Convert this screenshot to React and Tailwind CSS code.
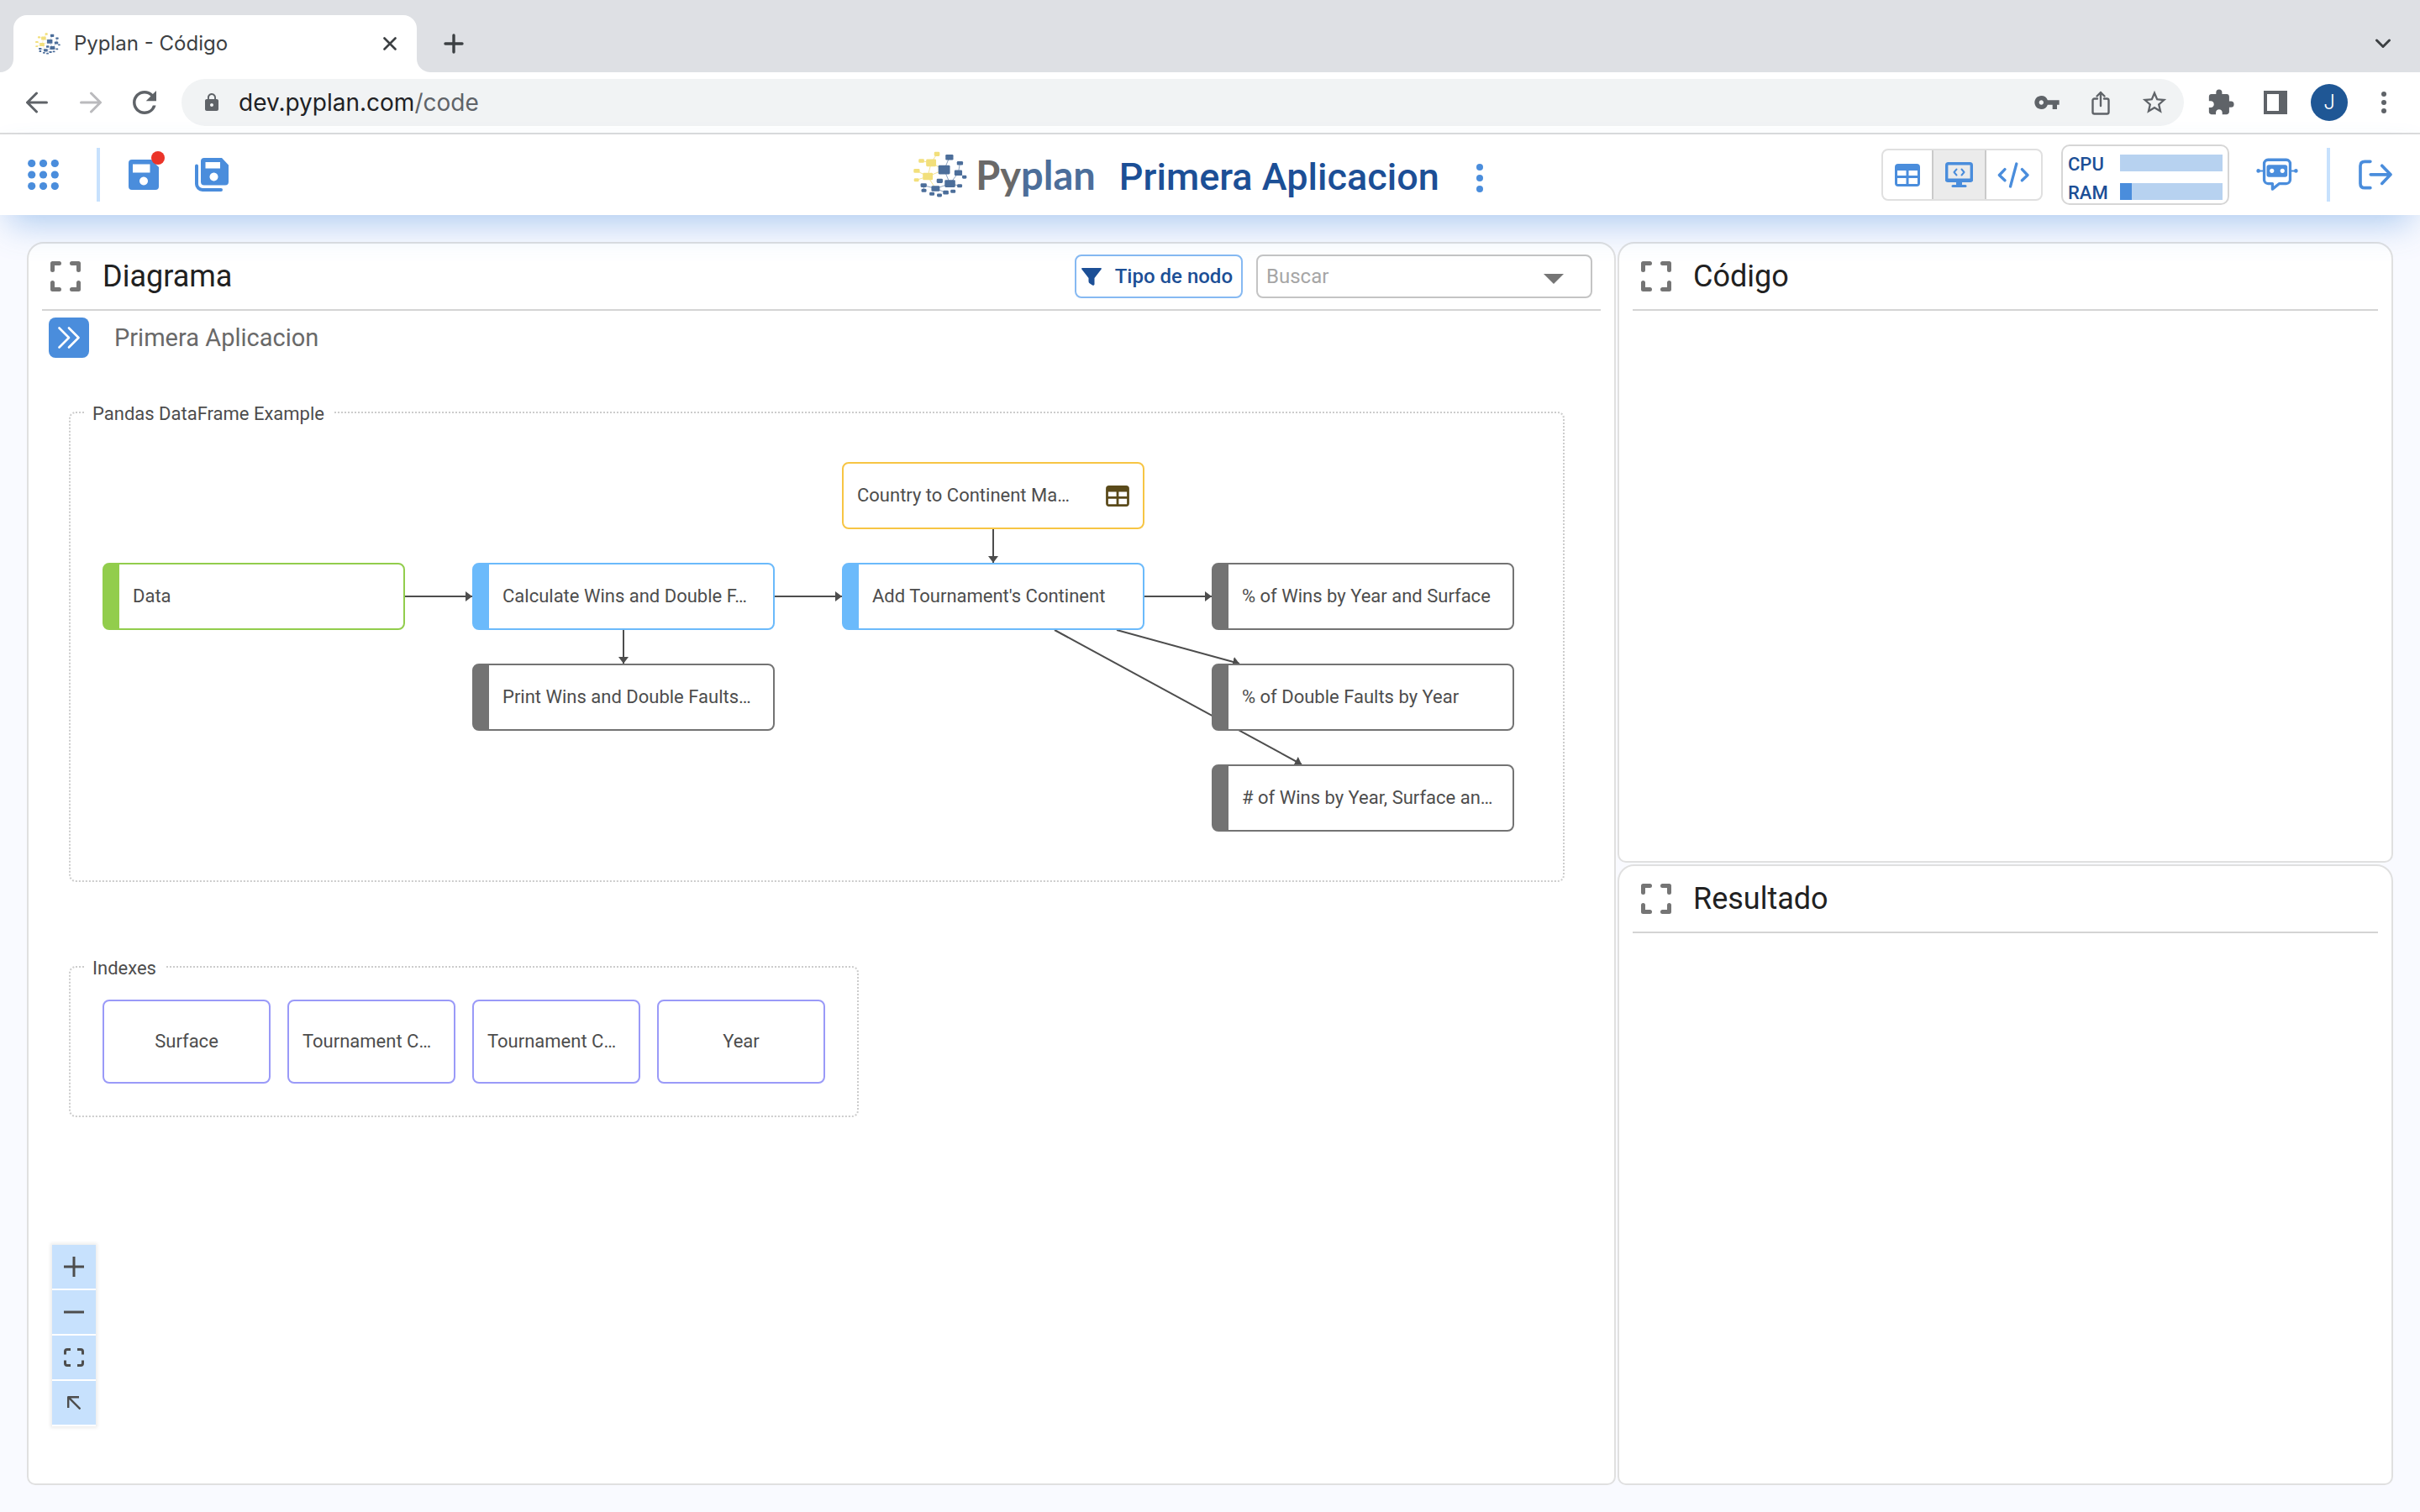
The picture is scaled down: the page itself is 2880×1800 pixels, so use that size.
import React from 'react';
import { MdExtension, MdLock, MdRefresh, MdStarOutline, MdVpnKey } from 'react-icons/md';

/* ---------- logo ---------- */

const YELLOW_SQUARES = [
  [113, 38, 20, 16], [57, 63, 20, 14], [92, 70, 36, 26], [40, 99, 22, 14], [80, 119, 36, 26], [39, 132, 18, 12],
];
const BLUE_SQUARES = [
  [158, 50, 28, 20], [196, 71, 22, 14], [139, 95, 42, 32], [190, 106, 28, 20], [212, 121, 16, 12],
  [123, 135, 22, 16], [160, 145, 38, 26], [195, 153, 18, 12], [65, 151, 22, 14], [66, 170, 18, 12],
  [108, 163, 30, 20], [145, 177, 20, 14], [171, 173, 18, 12], [95, 182, 18, 12], [122, 187, 18, 12],
];

function Mark({ className }) {
  return (
    <svg viewBox="28 28 194 168" className={className} aria-hidden="true">
      <path d="M57 63L92 70L139 95L80 119L92 70M40 99L80 119L108 163M39 132L80 119M113 38L92 70" fill="none" stroke="#f3e292" strokeWidth="3" />
      <path d="M158 50L139 95L160 145L190 106L212 121M160 145L195 153M65 151L108 163L160 145M108 163L145 177M66 170L65 151M190 106L196 71" fill="none" stroke="#8aa0bd" strokeWidth="3" />
      {YELLOW_SQUARES.map(([x, y, w, h]) => (
        <rect key={`${x}-${y}`} x={x - w / 2} y={y - h / 2} width={w} height={h} rx="4" fill="#f2df7b" />
      ))}
      {BLUE_SQUARES.map(([x, y, w, h]) => (
        <rect key={`${x}-${y}`} x={x - w / 2} y={y - h / 2} width={w} height={h} rx="4" fill="#4c6e9a" />
      ))}
    </svg>
  );
}

/* ---------- icons ---------- */

function Stroke({ box, className, width = 3, cap = 'round', children }) {
  return (
    <svg viewBox={box} className={className} fill="none" stroke="currentColor" strokeWidth={width} strokeLinecap={cap} strokeLinejoin="round" aria-hidden="true">
      {children}
    </svg>
  );
}

function TableIcon({ className }) {
  return (
    <svg viewBox="0 0 30 27" className={className} aria-hidden="true">
      <path fill="currentColor" fillRule="evenodd" d="M4 0H26a4 4 0 0 1 4 4V23a4 4 0 0 1-4 4H4a4 4 0 0 1-4-4V4a4 4 0 0 1 4-4ZM3 8V14H13.500V8ZM16.500 8V14H27V8ZM3 17V24H13.500V17ZM16.500 17V24H27V17Z" />
    </svg>
  );
}

function Disk({ className }) {
  return (
    <svg viewBox="0 0 36 36" className={className} aria-hidden="true">
      <path fill="currentColor" fillRule="evenodd" d="M4 0H27L36 9V32a4 4 0 0 1-4 4H4a4 4 0 0 1-4-4V4a4 4 0 0 1 4-4ZM5 5.500V15.500H25.500V5.500ZM18 20.500a5 5 0 1 0 .01 0Z" />
    </svg>
  );
}

function ExpandIcon() {
  return (
    <Stroke box="0 0 36 36" width={5} className="block size-9 text-[#757575]">
      <path d="M2.500 10.500V2.500H10.500M25.500 2.500H33.500V10.500M33.500 25.500V33.500H25.500M10.500 33.500H2.500V25.500" />
    </Stroke>
  );
}

/* ---------- browser frame ---------- */

function BrowserFrame() {
  return (
    <div className="font-[Inter,sans-serif]">
      <div className="flex h-[86px] items-center justify-between bg-[#dee0e4] pl-4 pr-[34px] text-[#3c4043]">
        <div className="flex h-full items-center gap-8">
          <div className="relative flex h-[68px] w-[480px] items-center self-end rounded-t-2xl bg-white pl-[26px] pr-6">
            <svg viewBox="0 0 16 16" className="absolute bottom-0 -left-4 size-4" aria-hidden="true"><path d="M16 0V16H0A16 16 0 0 0 16 0Z" fill="#fff" /></svg>
            <svg viewBox="0 0 16 16" className="absolute bottom-0 -right-4 size-4" aria-hidden="true"><path d="M0 0V16H16A16 16 0 0 1 0 0Z" fill="#fff" /></svg>
            <Mark className="block w-[30px]" />
            <span className="ml-4 flex-1 truncate text-2xl">Pyplan - Código</span>
            <button type="button" aria-label="Cerrar pestaña">
              <Stroke box="0 0 16 16" width={2.6} className="block size-4"><path d="M1.500 1.500L14.500 14.500M14.500 1.500L1.500 14.500" /></Stroke>
            </button>
          </div>
          <button type="button" aria-label="Nueva pestaña" className="pt-[18px]">
            <Stroke box="0 0 24 24" width={3.4} className="block size-6"><path d="M12 2V22M2 12H22" /></Stroke>
          </button>
        </div>
        <button type="button" aria-label="Buscar pestañas" className="pt-[18px]">
          <Stroke box="0 0 20 12" width={3} className="block h-3 w-5"><path d="M2.500 2L10 9.500L17.500 2" /></Stroke>
        </button>
      </div>

      <div className="flex h-[74px] items-center border-b-2 border-[#dcdcdc] bg-white pl-[31px] pr-10 text-[#5f6368]">
        <button type="button" aria-label="Atrás">
          <Stroke box="0 0 26 26" className="block size-[26px]"><path d="M24.500 13H2M12.500 2L1.500 13L12.500 24" /></Stroke>
        </button>
        <button type="button" aria-label="Adelante" className="ml-[38px] text-[#bababd]">
          <Stroke box="0 0 26 26" className="block size-[26px]"><path d="M1.500 13H24M13.500 2L24.500 13L13.500 24" /></Stroke>
        </button>
        <button type="button" aria-label="Recargar" className="ml-[30px]">
          <MdRefresh className="block size-[42px]" />
        </button>
        <div className="ml-[23px] flex h-14 flex-1 items-center rounded-full bg-[#f1f3f4] pl-6 pr-[18px]">
          <MdLock className="block size-6" />
          <div role="textbox" aria-label="Dirección" className="ml-5 flex-1 text-[28px] leading-9 text-[#5f6368]">
            <span className="text-[#202124]">dev.pyplan.com</span>/code
          </div>
          <button type="button" aria-label="Contraseñas"><MdVpnKey className="block size-8" /></button>
          <button type="button" aria-label="Compartir" className="ml-[37px]">
            <Stroke box="0 0 22 29" width={2.4} className="block h-[29px] w-[22px]">
              <path d="M7 9.500H3.500a2 2 0 0 0-2 2V25.500a2 2 0 0 0 2 2H18.500a2 2 0 0 0 2-2V11.500a2 2 0 0 0-2-2H15M11 18V2M6.500 6.500L11 2L15.500 6.500" />
            </Stroke>
          </button>
          <button type="button" aria-label="Favorito" className="ml-9"><MdStarOutline className="block size-[34px]" /></button>
        </div>
        <button type="button" aria-label="Extensiones" className="ml-[27px]"><MdExtension className="block size-[34px]" /></button>
        <button type="button" aria-label="Panel lateral" className="ml-[34px]">
          <svg viewBox="0 0 28 28" className="block size-7" aria-hidden="true"><path fill="currentColor" fillRule="evenodd" d="M0 0H28V28H0ZM4 4V24H18V4Z" /></svg>
        </button>
        <button type="button" className="ml-7 flex size-11 items-center justify-center rounded-full bg-[#1f5795] text-2xl font-light text-white">J</button>
        <button type="button" aria-label="Menú" className="ml-10 flex flex-col gap-1">
          <span className="size-1.5 rounded-full bg-current" />
          <span className="size-1.5 rounded-full bg-current" />
          <span className="size-1.5 rounded-full bg-current" />
        </button>
      </div>
    </div>
  );
}

/* ---------- application header ---------- */

function Usage({ label, value }) {
  return (
    <div className="flex h-5 items-end">
      <span className="w-[62px] text-[22px] leading-4 font-medium text-[#1c4f96]">{label}</span>
      <div role="meter" aria-label={label} aria-valuenow={value} aria-valuemin={0} aria-valuemax={100} className="h-5 flex-1 bg-[#b7d2f0]">
        <div className="h-full bg-[#4a8ddc]" style={{ width: `${value}%` }} />
      </div>
    </div>
  );
}

function AppHeader() {
  return (
    <header className="relative z-10 grid h-24 grid-cols-[1fr_auto_1fr] items-center bg-white px-[33px] text-[#4a8ddc] shadow-[0_20px_40px_-10px_rgba(74,141,220,0.43)]">
      <div className="flex items-center">
        <button type="button" aria-label="Aplicaciones">
          <svg viewBox="0 0 37 36" className="block h-9 w-[37px]" fill="currentColor" aria-hidden="true">
            {[4.7, 18.5, 32.300].map((x) => [4.5, 18, 31.500].map((y) => <circle key={`${x}-${y}`} cx={x} cy={y} r="4.6" />))}
          </svg>
        </button>
        <div className="ml-[45px] h-16 w-1 bg-[#c7e1fd]" />
        <button type="button" aria-label="Guardar" className="relative ml-[34px]">
          <Disk className="block size-9" />
          <span className="absolute -top-2.5 -right-[7px] size-4 rounded-full bg-[#eb3429]" />
        </button>
        <button type="button" aria-label="Guardar como" className="ml-[43px]">
          <svg viewBox="0 0 40 40" className="block size-10" aria-hidden="true">
            <path d="M2 9.500V31a7 7 0 0 0 7 7H31" fill="none" stroke="currentColor" strokeWidth="4" strokeLinecap="round" />
            <path fill="currentColor" fillRule="evenodd" d="M11 0H32L40 8.500V28.500a4 4 0 0 1-4 4H11a4 4 0 0 1-4-4V4a4 4 0 0 1 4-4ZM12.500 5V12.500H30V5ZM22.500 17.500a5 5 0 1 0 .01 0Z" />
          </svg>
        </button>
      </div>

      <div className="flex items-center pr-1">
        <Mark className="block w-16" />
        <span className="ml-2.5 font-[Lato,sans-serif] text-[47px] leading-[56px] font-bold text-[#696969]">
          Py<span className="text-[#4c6e9a]">plan</span>
        </span>
        <h1 className="ml-7 pt-1.5 text-[45px] leading-[52px] font-medium text-[#1c4f96]">Primera Aplicacion</h1>
        <button type="button" aria-label="Opciones" className="ml-5 flex w-14 flex-col items-center gap-[5px] pt-2">
          <span className="size-2 rounded-full bg-current" />
          <span className="size-2 rounded-full bg-current" />
          <span className="size-2 rounded-full bg-current" />
        </button>
      </div>

      <div className="flex items-center justify-end">
        <div className="flex h-[62px] overflow-hidden rounded-lg border-2 border-[#e0e0e0]">
          <button type="button" aria-label="Interfaces" className="flex w-[58px] items-center justify-center">
            <TableIcon className="block h-[27px] w-[30px]" />
          </button>
          <button type="button" aria-label="Diagrama" aria-pressed="true" className="-my-0.5 flex w-[65px] items-center justify-center border-2 border-[#cacaca] bg-[#ebebeb]">
            <svg viewBox="0 0 33 30" className="block h-[30px] w-[33px]" fill="none" stroke="currentColor" strokeLinecap="round" strokeLinejoin="round" aria-hidden="true">
              <rect x="1.700" y="1.700" width="29.600" height="20.600" rx="2" strokeWidth="3.400" />
              <path d="M2 21.500H31" strokeWidth="4" />
              <path d="M13 23H20V29H13Z" fill="currentColor" stroke="none" />
              <path d="M9 28.500H24" strokeWidth="3" />
              <path d="M13.500 8.500L10.500 12L13.500 15.500M19.500 8.500L22.500 12L19.500 15.500" strokeWidth="2" />
            </svg>
          </button>
          <button type="button" aria-label="Código" className="flex w-[65px] items-center justify-center">
            <Stroke box="-8 307 116 94" width={10} className="block h-[31px] w-[39px]">
              <path d="M18 333L-2 354L18 373M60 313L38 395M80 333L100 354L80 373" />
            </Stroke>
          </button>
        </div>

        <div className="ml-[22px] flex h-[72px] w-[200px] flex-col gap-3.5 rounded-[10px] border-2 border-[#d6d6d6] px-1.5 pt-2.5">
          <Usage label="CPU" value={0} />
          <Usage label="RAM" value={11.500} />
        </div>

        <button type="button" aria-label="Asistente" className="ml-8">
          <svg viewBox="914 290 152 126" className="block h-[42px] w-[50px]" fill="none" stroke="currentColor" strokeLinejoin="round" aria-hidden="true">
            <path d="M957 299H1023a14 14 0 0 1 14 14V371a14 14 0 0 1-14 14H998L973 405V385H957a14 14 0 0 1-14-14V313a14 14 0 0 1 14-14Z" strokeWidth="10" />
            <path d="M922 339H942M1038 339H1058" strokeWidth="6" />
            <circle cx="922" cy="339" r="7" fill="currentColor" stroke="none" />
            <circle cx="1058" cy="339" r="7" fill="currentColor" stroke="none" />
            <path fillRule="evenodd" fill="currentColor" stroke="none" d="M960 317H1019a8 8 0 0 1 8 8V353a8 8 0 0 1-8 8H960a8 8 0 0 1-8-8V325a8 8 0 0 1 8-8ZM971 331a8 8 0 1 0 .01 0ZM1009 331a8 8 0 1 0 .01 0Z" />
          </svg>
        </button>
        <div className="ml-[34px] h-16 w-1 bg-[#c7e1fd]" />
        <button type="button" aria-label="Salir" className="ml-[34px]">
          <Stroke box="1281 300 121 109" width={11} className="block h-9 w-10">
            <path d="M1323 307H1303Q1287 307 1287 323V386Q1287 402 1303 402H1323M1324 354H1396M1365 322L1396 354L1365 386" />
          </Stroke>
        </button>
      </div>
    </header>
  );
}

/* ---------- panels ---------- */

function Panel({ title, actions, children }) {
  return (
    <section className="flex min-h-0 flex-col rounded-t-[20px] rounded-b-[10px] border-2 border-[#e0e0e0] bg-white">
      <div className="mx-4 flex h-20 shrink-0 items-center gap-4 border-b-2 border-[#d4d4d4] px-2.5">
        <button type="button" aria-label={`Expandir ${title}`}><ExpandIcon /></button>
        <h2 className="ml-2.5 flex-1 text-4xl text-[#212121]">{title}</h2>
        {actions}
      </div>
      {children}
    </section>
  );
}

function DiagramActions() {
  return (
    <>
      <button type="button" className="flex h-[52px] items-center gap-4 rounded-lg border-2 border-[#86b9f2] pr-2.5 pl-1.5 text-2xl font-medium text-[#1c4f96]">
        <svg viewBox="0 0 24 21" className="block h-[21px] w-6" fill="currentColor" aria-hidden="true">
          <path d="M1 0H23Q24.500 0.300 23.500 1.800L15.500 12V19.500Q15 21.500 13 20.500L10 18.500Q8.500 17.500 8.500 16V12L.5 1.800Q-.5 .3 1 0Z" />
        </svg>
        Tipo de nodo
      </button>
      <div className="flex h-[52px] w-[400px] items-center rounded-lg border-2 border-[#c4c4c4] pr-8 pl-2.5">
        <input type="text" role="combobox" aria-expanded="false" aria-label="Buscar" placeholder="Buscar" className="min-w-0 flex-1 bg-transparent text-2xl text-[#212121] outline-none placeholder:text-[#a6a6a6]" />
        <button type="button" aria-label="Abrir lista" className="pt-1.5">
          <svg viewBox="0 0 24 12" className="block h-3 w-6" fill="#757575" aria-hidden="true"><path d="M0 0H24L12 12Z" /></svg>
        </button>
      </div>
    </>
  );
}

/* ---------- diagram ---------- */

const GROUPS = [
  { title: 'Pandas DataFrame Example', x: 48, y: 64, w: 1780, h: 560 },
  { title: 'Indexes', x: 48, y: 724, w: 940, h: 180 },
];

const TONES = {
  green: 'border-[#92cd4c] border-l-[20px] text-left',
  blue: 'border-[#6bbafb] border-l-[20px] text-left',
  gray: 'border-[#737373] border-l-[20px] text-left',
  amber: 'border-[#f7c544] text-left',
  violet: 'border-[#9a9af8] text-center',
  violetLong: 'border-[#9a9af8] text-left',
};

const NODES = [
  { label: 'Data', tone: 'green', x: 88, y: 244 },
  { label: 'Calculate Wins and Double F…', tone: 'blue', x: 528, y: 244 },
  { label: 'Print Wins and Double Faults…', tone: 'gray', x: 528, y: 364 },
  { label: 'Country to Continent Ma…', tone: 'amber', x: 968, y: 124, table: true },
  { label: "Add Tournament's Continent", tone: 'blue', x: 968, y: 244 },
  { label: '% of Wins by Year and Surface', tone: 'gray', x: 1408, y: 244 },
  { label: '% of Double Faults by Year', tone: 'gray', x: 1408, y: 364 },
  { label: '# of Wins by Year, Surface an…', tone: 'gray', x: 1408, y: 484 },
  { label: 'Surface', tone: 'violet', x: 88, y: 764, w: 200, h: 100 },
  { label: 'Tournament C…', tone: 'violetLong', x: 308, y: 764, w: 200, h: 100 },
  { label: 'Tournament C…', tone: 'violetLong', x: 528, y: 764, w: 200, h: 100 },
  { label: 'Year', tone: 'violet', x: 748, y: 764, w: 200, h: 100 },
];

const EDGES = [
  [448, 284, 528, 284], [888, 284, 968, 284], [1328, 284, 1408, 284],
  [708, 324, 708, 364], [1148, 204, 1148, 244],
  [1295, 324, 1441, 364], [1221, 324, 1515, 484],
];

function Diagram() {
  return (
    <div className="relative flex-1 overflow-hidden text-[22px] leading-[26px] text-[#4d4d4d]">
      {GROUPS.map((g) => (
        <div key={g.title} className="absolute rounded-lg border-2 border-dotted border-[#cccccc]" style={{ left: g.x, top: g.y, width: g.w, height: g.h }}>
          <span className="absolute -top-3 left-4 bg-white px-2.5 whitespace-nowrap">{g.title}</span>
        </div>
      ))}
      <svg className="absolute inset-0 size-full" stroke="#4d4d4d" strokeWidth="2" aria-hidden="true">
        <defs>
          <marker id="tip" markerUnits="userSpaceOnUse" markerWidth="8" markerHeight="12" refX="8" refY="6" orient="auto">
            <path d="M0 0L8 6L0 12Z" fill="#4d4d4d" stroke="none" />
          </marker>
        </defs>
        {EDGES.map(([x1, y1, x2, y2]) => (
          <line key={`${x1}-${y1}-${x2}`} x1={x1} y1={y1} x2={x2} y2={y2} markerEnd="url(#tip)" />
        ))}
      </svg>
      {NODES.map((n) => (
        <button
          key={`${n.x}-${n.y}`}
          type="button"
          className={`absolute flex items-center rounded-lg border-2 bg-white px-4 ${TONES[n.tone]}`}
          style={{ left: n.x, top: n.y, width: n.w || 360, height: n.h || 80 }}
        >
          <span className="flex-1 whitespace-nowrap">{n.label}</span>
          {n.table && <TableIcon className="block h-[25px] w-7 text-[#5a4a1a]" />}
        </button>
      ))}
    </div>
  );
}

function ZoomButton({ label, children }) {
  return (
    <button type="button" aria-label={label} className="flex size-[52px] items-center justify-center bg-[#c7e1fd] text-[#4d4d4d]">
      {children}
    </button>
  );
}

function ZoomControls() {
  return (
    <div className="absolute bottom-[68px] left-7 flex flex-col gap-0.5 bg-white pb-0.5 shadow-[0_0_4px_2px_rgba(0,0,0,0.08)]">
      <ZoomButton label="Acercar">
        <Stroke box="0 0 24 24" width={3} cap="butt" className="block size-6"><path d="M12 0V24M0 12H24" /></Stroke>
      </ZoomButton>
      <ZoomButton label="Alejar">
        <Stroke box="0 0 24 24" width={3} cap="butt" className="block size-6"><path d="M0 12H24" /></Stroke>
      </ZoomButton>
      <ZoomButton label="Ajustar a la vista">
        <Stroke box="0 0 24 22" width={3} cap="butt" className="block h-[22px] w-6">
          <path d="M1.500 7.500V4Q1.500 1.500 4 1.500H8M16 1.500H20Q22.500 1.500 22.500 4V7.500M22.500 14.500V18Q22.500 20.500 20 20.500H16M8 20.500H4Q1.500 20.500 1.500 18V14.500" />
        </Stroke>
      </ZoomButton>
      <ZoomButton label="Volver al inicio">
        <Stroke box="0 0 16 16" width={2.4} cap="butt" className="block size-4"><path d="M1.200 14V1.200H14M1.200 1.200L15.500 15.500" /></Stroke>
      </ZoomButton>
    </div>
  );
}

export default function App() {
  return (
    <div className="flex min-h-screen flex-col bg-[#f9faff] font-[Roboto,sans-serif]">
      <BrowserFrame />
      <AppHeader />
      <main className="grid flex-1 grid-cols-[1891fr_923fr] gap-0.5 p-8">
        <Panel title="Diagrama" actions={<DiagramActions />}>
          <div className="relative flex flex-1 flex-col">
            <nav className="ml-6 flex h-14 items-center gap-[30px] pt-2" aria-label="Ruta">
              <button type="button" aria-label="Mostrar árbol" className="flex size-12 items-center justify-center rounded-lg bg-[#4a8ddc] text-white">
                <Stroke box="0 0 26 26" width={2.6} className="block size-[26px]"><path d="M1.500 1.500L13 13L1.500 24.500M13 1.500L24.500 13L13 24.500" /></Stroke>
              </button>
              <a href="#primera-aplicacion" className="text-[29px] leading-9 text-[#696969]">Primera Aplicacion</a>
            </nav>
            <Diagram />
            <ZoomControls />
          </div>
        </Panel>
        <div className="grid grid-rows-2 gap-0.5">
          <Panel title="Código" />
          <Panel title="Resultado" />
        </div>
      </main>
    </div>
  );
}
